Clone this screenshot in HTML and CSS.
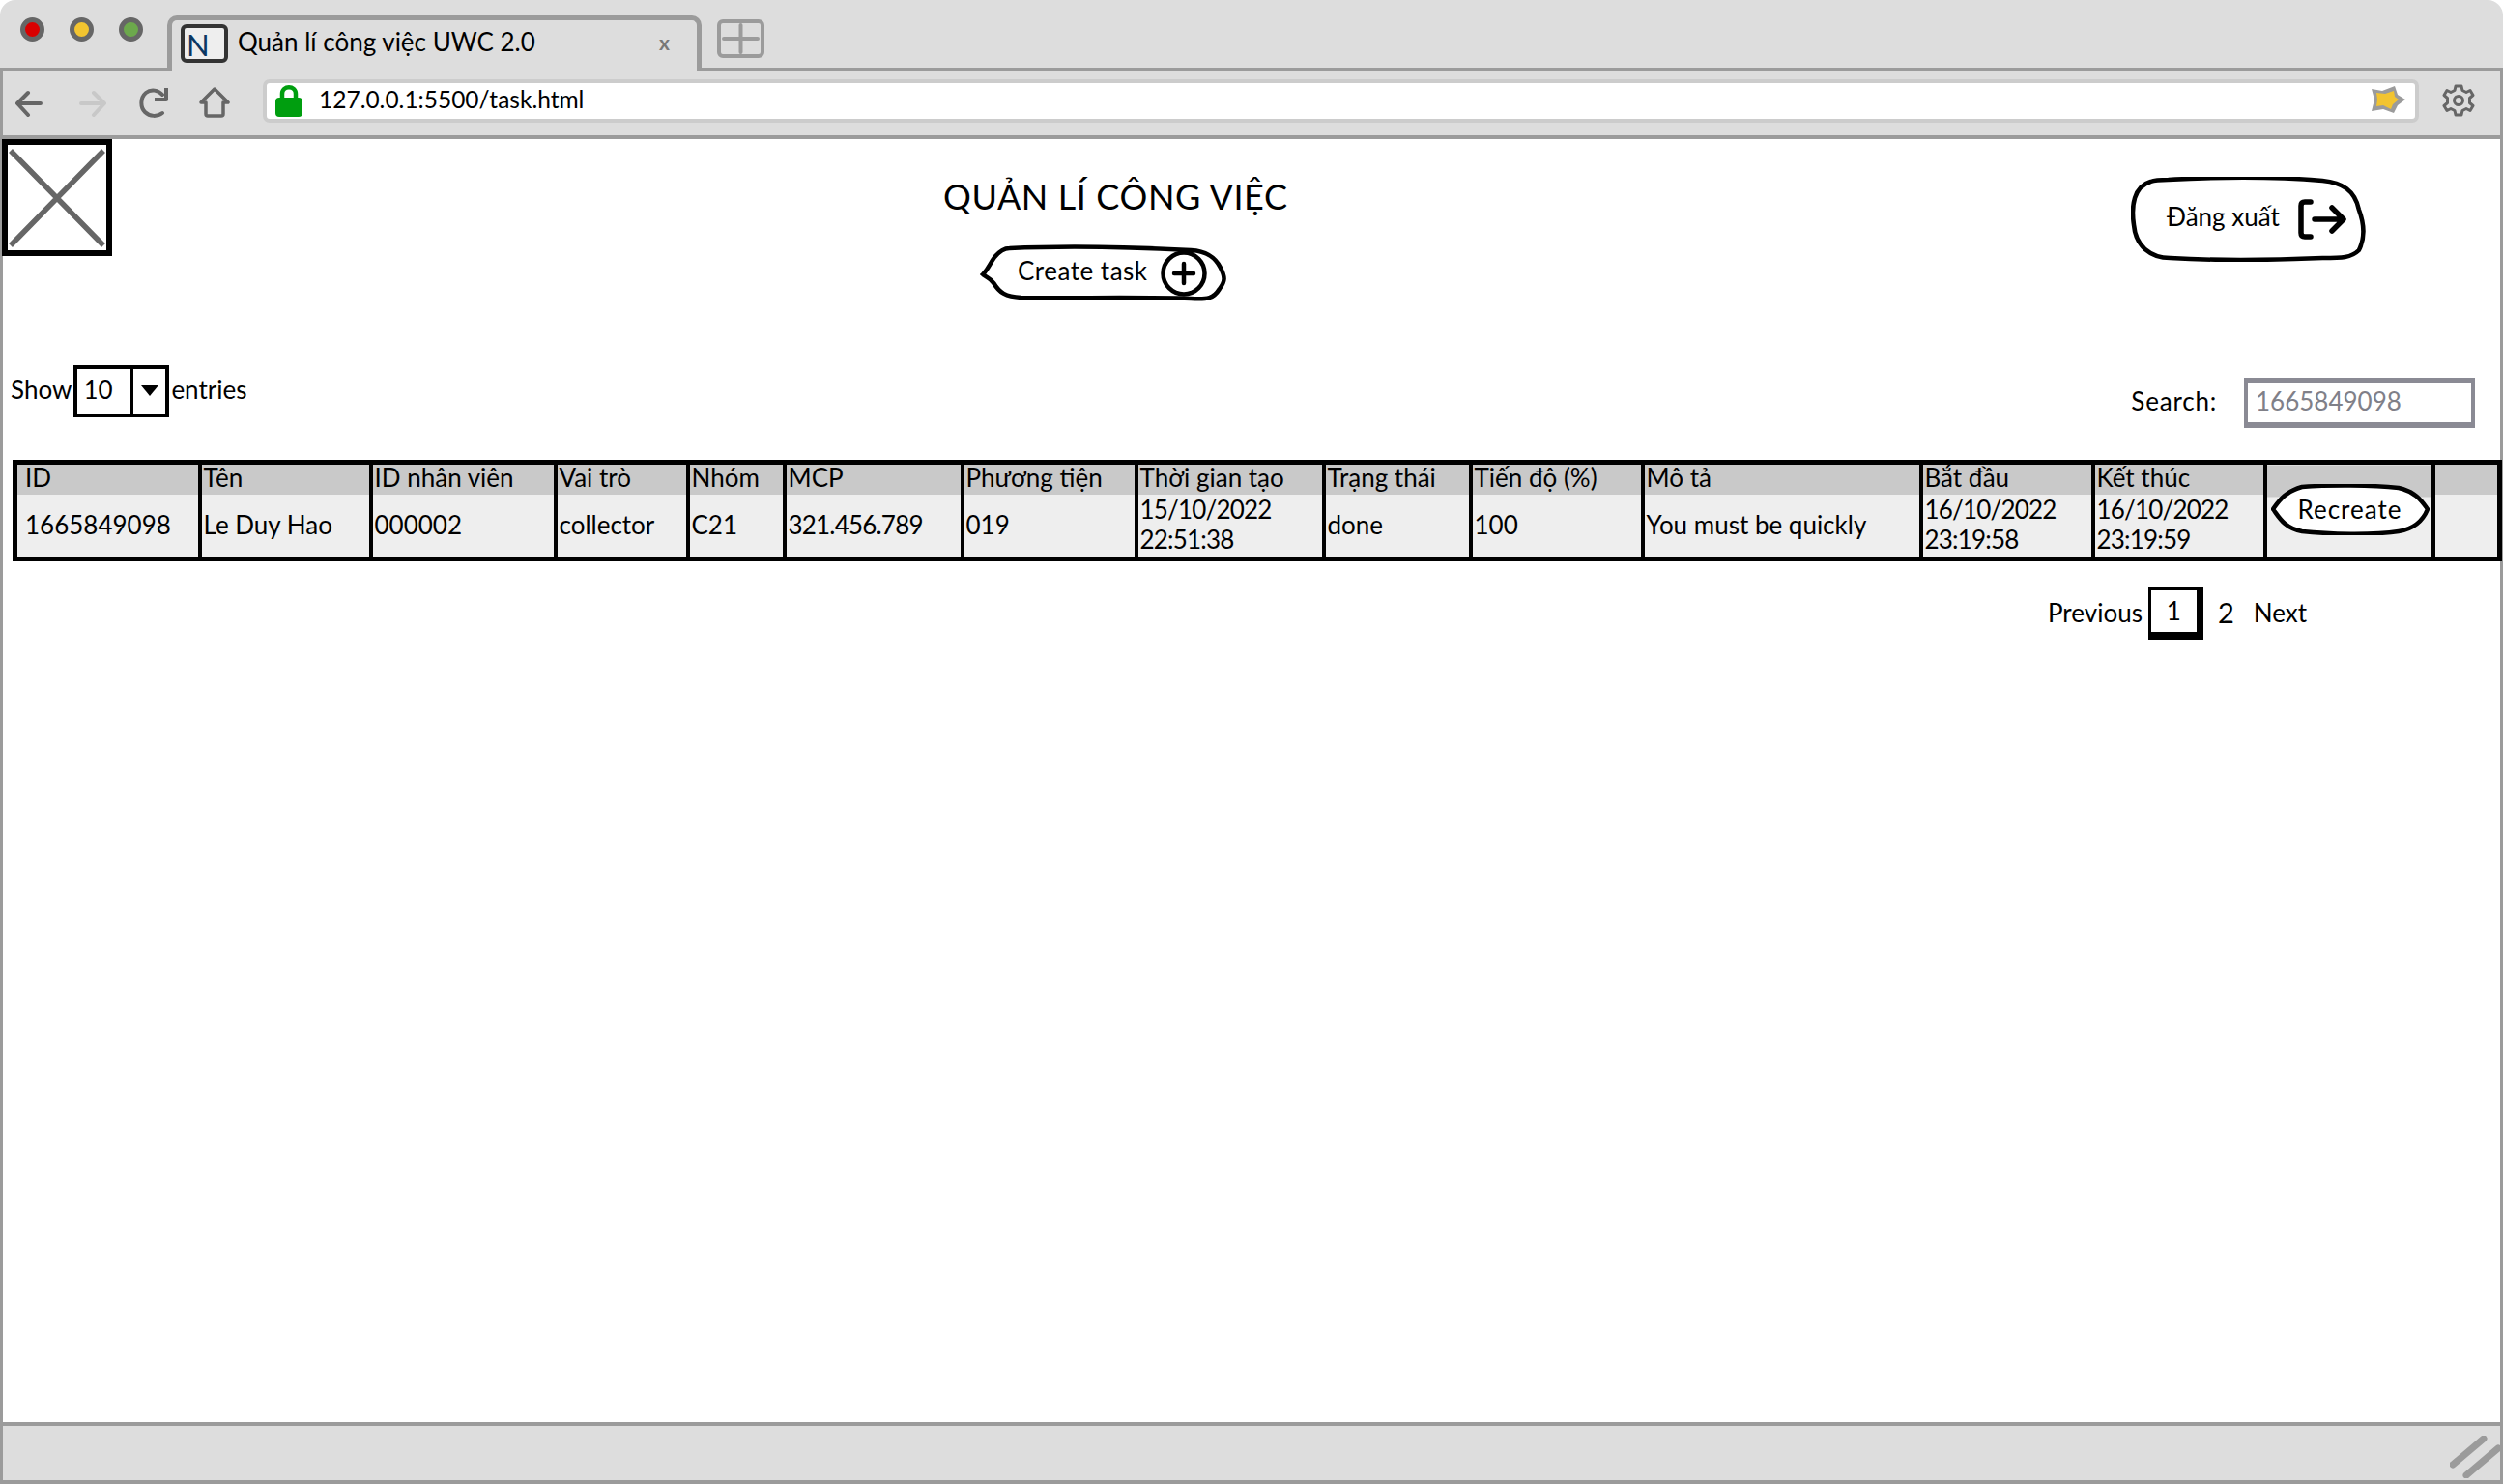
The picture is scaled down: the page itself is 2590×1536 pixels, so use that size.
FILE: index.html
```html
<!DOCTYPE html>
<html lang="vi">
<head>
  <meta charset="UTF-8" />
  <title>Quản lí công việc UWC 2.0</title>
  <link rel="stylesheet" href="styles.css">
</head>
<body>
  <div class="window">
    <div class="tabbar">
      <span class="light red"></span>
      <span class="light yellow"></span>
      <span class="light green"></span>
      <div class="tab">
        <span class="favicon">N</span>
        <span class="tab-title">Quản lí công việc UWC 2.0</span>
        <span class="tab-close">x</span>
      </div>
      <svg class="new-tab" width="49" height="40" viewBox="0 0 49 40">
        <rect x="2" y="2" width="45" height="36" rx="4" fill="none" stroke="#9b9b9b" stroke-width="4"/>
        <path d="M7 20H42M24.500 6V34" fill="none" stroke="#9b9b9b" stroke-width="4" stroke-linecap="round"/>
      </svg>
    </div>

    <div class="toolbar">
      <svg class="nav-icon back" width="28" height="28" viewBox="0 0 28 28">
        <path d="M26 14H3M13 3L2 14L13 26" fill="none" stroke="#666" stroke-width="4" stroke-linecap="round" stroke-linejoin="round"/>
      </svg>
      <svg class="nav-icon forward" width="28" height="28" viewBox="0 0 28 28">
        <path d="M2 14H25M15 3L26 14L15 26" fill="none" stroke="#c8c8c8" stroke-width="4" stroke-linecap="round" stroke-linejoin="round"/>
      </svg>
      <svg class="nav-icon reload" width="30" height="32" viewBox="0 0 30 32">
        <path d="M24 8C20 3 12 2 7 6C1 11 1 21 6 26C11 31 19 31 24 27" fill="none" stroke="#666" stroke-width="4" stroke-linecap="round"/>
        <path d="M28 1V13H16" fill="none" stroke="#666" stroke-width="4" stroke-linejoin="round"/>
      </svg>
      <svg class="nav-icon home" width="32" height="32" viewBox="0 0 32 32">
        <path d="M16 2L30 16H25V28Q25 30 23 30H9Q7 30 7 28V16H2Z" fill="none" stroke="#666" stroke-width="3.500" stroke-linejoin="round"/>
      </svg>
      <div class="address">
        <svg class="lock" width="28" height="33" viewBox="0 0 28 33">
          <path d="M7 15V9C7 0 21 0 21 9V15" fill="none" stroke="#009e0f" stroke-width="4.500"/>
          <rect x="0" y="13" width="28" height="20" rx="4" fill="#009e0f"/>
        </svg>
        <span class="url">127.0.0.1:5500/task.html</span>
        <svg class="star" width="36" height="30" viewBox="0 0 36 30">
          <path d="M0 3L11 5L24 0L27 9L35 14L27 20L23 28L12 24L0 26L3 14Z" fill="#9b9b9b"/>
          <path d="M5 7L14 8L23 5L24 11L28 14L22 19L20 24L12 20L5 21L6 14Z" fill="#f2c430"/>
        </svg>
      </div>
      <svg class="gear" width="34" height="34" viewBox="0 0 34 34">
        <path d="M14 2H20L21 6.500L25 8.500L29 6.500L32 11.500L28.500 14.500V19.500L32 22.500L29 27.500L25 25.500L21 27.500L20 32H14L13 27.500L9 25.500L5 27.500L2 22.500L5.500 19.500V14.500L2 11.500L5 6.500L9 8.500L13 6.500Z" fill="none" stroke="#666" stroke-width="3" stroke-linejoin="round"/>
        <circle cx="17" cy="17" r="4.500" fill="none" stroke="#666" stroke-width="3"/>
      </svg>
    </div>

    <div class="content">
      <div class="page-head">
        <svg class="logo" width="114" height="121" viewBox="0 0 114 121">
          <rect x="3" y="3" width="108" height="115" fill="#fff" stroke="#000" stroke-width="6"/>
          <path d="M9 12L105 110M105 12L9 110" fill="none" stroke="#666" stroke-width="5.500"/>
        </svg>
        <div class="head-center">
          <h1 class="page-title">QUẢN LÍ CÔNG VIỆC</h1>
          <button class="sketch-btn create-btn" type="button">
            <svg class="btn-shape" viewBox="0 0 253 60" preserveAspectRatio="none">
              <path d="M30 4C90 1 160 3 215 6C232 7 240 14 245 24C250 34 250 38 244 46C238 56 232 57 215 56C160 54 90 56 42 55C26 54 20 50 14 40C11 35 6 34 3 31C8 26 10 20 15 13C20 7 24 4 30 4Z" fill="#fff" stroke="#000" stroke-width="4.500"/>
            </svg>
            <span class="btn-label">Create task</span>
            <svg class="btn-icon" width="48" height="48" viewBox="0 0 48 48">
              <circle cx="24" cy="24" r="21.500" fill="#fff" stroke="#000" stroke-width="4.500"/>
              <path d="M24 14V34M14 24H34" fill="none" stroke="#000" stroke-width="4.500" stroke-linecap="round"/>
            </svg>
          </button>
        </div>
        <button class="sketch-btn logout-btn" type="button">
          <svg class="btn-shape" viewBox="0 0 239 88" preserveAspectRatio="none">
            <path d="M38 3C90 0 150 0 195 4C215 6 228 14 232 34C238 50 238 64 232 76C224 84 215 84 195 84C150 86 90 87 40 84C20 84 5 72 3 50C0 30 3 10 20 5C25 3 33 3 38 3Z" fill="#fff" stroke="#000" stroke-width="4.500"/>
          </svg>
          <span class="btn-label">Đăng xuất</span>
          <svg class="btn-icon" width="51" height="42" viewBox="0 0 51 42">
            <path d="M13 3H7Q3 3 3 7V35Q3 39 7 39H13" fill="none" stroke="#000" stroke-width="5.500" stroke-linecap="round"/>
            <path d="M17 21H46M35 9L47 21L35 33" fill="none" stroke="#000" stroke-width="5.500" stroke-linecap="round" stroke-linejoin="round"/>
          </svg>
        </button>
      </div>

      <div class="table-controls">
        <div class="show-entries">
          <span class="entries-text">Show</span>
          <div class="entries-select">
            <span class="entries-value">10</span>
            <span class="entries-arrow"></span>
          </div>
          <span class="entries-text">entries</span>
        </div>
        <label class="search-box">
          <span class="search-label">Search:</span>
          <input class="search-input" type="text" value="1665849098" />
        </label>
      </div>

      <table class="task-table">
        <colgroup>
          <col class="c-id"><col class="c-name"><col class="c-staff"><col class="c-role"><col class="c-group">
          <col class="c-mcp"><col class="c-vehicle"><col class="c-created"><col class="c-status"><col class="c-progress">
          <col class="c-desc"><col class="c-start"><col class="c-end"><col class="c-action"><col class="c-last">
        </colgroup>
        <tbody>
          <tr class="head-row">
            <th class="first">ID</th>
            <th>Tên</th>
            <th>ID nhân viên</th>
            <th>Vai trò</th>
            <th>Nhóm</th>
            <th>MCP</th>
            <th>Phương tiện</th>
            <th>Thời gian tạo</th>
            <th>Trạng thái</th>
            <th>Tiến độ (%)</th>
            <th>Mô tả</th>
            <th>Bắt đầu</th>
            <th>Kết thúc</th>
            <td class="action-cell" rowspan="2">
              <button class="sketch-btn recreate-btn" type="button">
                <svg class="btn-shape" viewBox="0 0 164 53" preserveAspectRatio="none">
                  <path d="M32 3C60 1 105 1 132 4C150 8 156 18 162 26C158 36 150 46 132 49C105 53 60 52 32 49C14 46 8 34 2 26C8 18 14 8 32 3Z" fill="#fff" stroke="#000" stroke-width="4.500"/>
                </svg>
                <span class="btn-label">Recreate</span>
              </button>
            </td>
            <th></th>
          </tr>
          <tr class="data-row">
            <td class="first">1665849098</td>
            <td>Le Duy Hao</td>
            <td>000002</td>
            <td>collector</td>
            <td>C21</td>
            <td class="num">321.456.789</td>
            <td>019</td>
            <td class="num">15/10/2022<br>22:51:38</td>
            <td>done</td>
            <td>100</td>
            <td>You must be quickly</td>
            <td class="num">16/10/2022<br>23:19:58</td>
            <td class="num">16/10/2022<br>23:19:59</td>
            <td></td>
          </tr>
        </tbody>
      </table>

      <div class="pagination">
        <span class="page-prev">Previous</span>
        <span class="page-current">1</span>
        <span class="page-link">2</span>
        <span class="page-next">Next</span>
      </div>
    </div>

    <div class="statusbar">
      <svg class="resize-grip" width="52" height="44" viewBox="0 0 52 44">
        <path d="M3 30L35 3M17 41L50 13" fill="none" stroke="#9b9b9b" stroke-width="7" stroke-linecap="round"/>
      </svg>
    </div>
  </div>
</body>
</html>
```

FILE: styles.css
```css
* {
  box-sizing: border-box;
}
body {
  margin: 0;
  background: #fff;
  color: #000;
  font-family: Lato, "Noto Sans", sans-serif;
  font-size: 26px;
}
button {
  font-family: inherit;
  font-size: inherit;
  color: inherit;
  padding: 0;
  border: none;
  background: none;
}

.window {
  display: flex;
  flex-direction: column;
  height: 100vh;
  overflow: hidden;
}

/* browser chrome */
.tabbar {
  display: flex;
  align-items: flex-start;
  flex: none;
  height: 73px;
  padding: 18px 0 0 21px;
  background: #ddd;
  border-bottom: 3px solid #9b9b9b;
  border-radius: 16px 16px 0 0;
}
.light {
  flex: none;
  width: 25px;
  height: 25px;
  margin-right: 26px;
  border: 5px solid #666;
  border-radius: 50%;
}
.red { background: #d90000; }
.yellow { background: #f2c430; }
.green { background: #6ca84c; }
.tab {
  display: flex;
  align-items: center;
  flex: none;
  width: 553px;
  height: 57px;
  margin: -2px 0 0 -1px;
  padding: 3px 28px 11px 9px;
  background: #ddd;
  border: 5px solid #9b9b9b;
  border-bottom: none;
  border-radius: 10px 10px 0 0;
}
.favicon {
  flex: none;
  width: 49px;
  height: 40px;
  margin-top: 4px;
  padding-left: 2px;
  background: #eee;
  border: 4px solid #333;
  border-radius: 6px;
  color: #0c3762;
  font-size: 31px;
  line-height: 34px;
}
.tab-title {
  margin-left: 10px;
  font-size: 26px;
  white-space: nowrap;
}
.tab-close {
  margin-left: auto;
  color: #777;
  font-size: 21px;
  font-weight: 700;
}
.new-tab {
  flex: none;
  margin: 2px 0 0 16px;
}

.toolbar {
  display: flex;
  align-items: center;
  flex: none;
  height: 71px;
  padding-bottom: 5px;
  background: #ddd;
  border-left: 3px solid #9b9b9b;
  border-right: 3px solid #9b9b9b;
  border-bottom: 4px solid #9b9b9b;
}
.nav-icon {
  flex: none;
}
.back { margin: 6px 0 0 13px; }
.forward { margin: 6px 0 0 38px; }
.reload { margin: 4px 0 0 34px; }
.home { margin: 4px 0 0 32px; }
.address {
  display: flex;
  align-items: center;
  flex: none;
  width: 2231px;
  height: 45px;
  margin-left: 34px;
  padding: 0 9px;
  background: #fff;
  border: 4px solid #ccc;
  border-radius: 7px;
}
.lock {
  flex: none;
}
.url {
  margin-top: -3px;
  margin-left: 17px;
  font-size: 24.500px;
  white-space: nowrap;
}
.star {
  margin-left: auto;
}
.gear {
  flex: none;
  margin-left: 24px;
}

/* page */
.content {
  flex: 1;
  min-height: 0;
  padding-left: 10px;
  border-left: 3px solid #9b9b9b;
  border-right: 3px solid #9b9b9b;
}
.page-head {
  display: flex;
  align-items: flex-start;
  margin-bottom: 65px;
}
.logo {
  flex: none;
  margin-left: -11px;
}
.head-center {
  display: flex;
  flex-direction: column;
  margin-left: 860px;
  padding-top: 37px;
}
.page-title {
  margin: 0;
  font-size: 36px;
  font-weight: 400;
  letter-spacing: 0.6px;
  line-height: 44px;
  white-space: nowrap;
}
.sketch-btn {
  position: relative;
  display: flex;
  align-items: center;
}
.btn-shape {
  position: absolute;
  left: 0;
  top: 0;
  width: 100%;
  height: 100%;
}
.btn-label,
.btn-icon {
  position: relative;
}
.btn-icon {
  flex: none;
}
.create-btn {
  width: 257px;
  height: 60px;
  margin: 28px 0 0 38px;
  padding: 0 22px 0 39px;
  justify-content: space-between;
}
.create-btn .btn-label {
  margin-top: -6px;
  letter-spacing: 0.5px;
}
.logout-btn {
  width: 243px;
  height: 88px;
  margin: 39px 0 0 auto;
  margin-right: 139px;
  padding: 0 19px 0 37px;
  justify-content: space-between;
}
.logout-btn .btn-label {
  margin-top: -6px;
}

.table-controls {
  display: flex;
  justify-content: space-between;
  align-items: flex-start;
  margin-bottom: 33px;
  padding-right: 26px;
}
.show-entries {
  display: flex;
  align-items: center;
  gap: 2px;
  height: 54px;
  margin-left: -2px;
}
.entries-text {
  margin-top: -4px;
}
.entries-select {
  display: flex;
  width: 99px;
  height: 54px;
  border: 4px solid #000;
}
.entries-value {
  flex: 1;
  padding-left: 6px;
  line-height: 42px;
}
.entries-arrow {
  position: relative;
  width: 36px;
  border-left: 3px solid #000;
}
.entries-arrow::after {
  content: "";
  position: absolute;
  left: 8px;
  top: 17px;
  border-left: 9px solid transparent;
  border-right: 9px solid transparent;
  border-top: 11px solid #000;
}
.search-box {
  display: flex;
  align-items: center;
  gap: 28px;
  margin-top: 13px;
}
.search-label {
  margin-top: -5px;
  letter-spacing: 0.8px;
}
.search-input {
  width: 239px;
  height: 52px;
  padding: 0 8px 4px;
  border: 4px solid #8a8a94;
  border-top-width: 5px;
  border-bottom-width: 6px;
  border-radius: 0;
  outline: none;
  color: #808088;
  font-family: inherit;
  font-size: 26px;
}

.task-table {
  width: 2571px;
  height: 105px;
  border: 5px solid #000;
  border-collapse: collapse;
  table-layout: fixed;
}
.task-table th,
.task-table td {
  padding: 0 0 0 2px;
  border-left: 4px solid #000;
  border-right: 4px solid #000;
  font-weight: 400;
  text-align: left;
  white-space: nowrap;
}
.head-row {
  height: 33px;
}
.data-row {
  height: 64px;
}
.task-table th {
  padding-bottom: 5px;
  background: #c9c9c9;
  line-height: 26px;
}
.task-table td {
  padding-bottom: 2px;
  background: #eee;
  line-height: 31px;
}
.task-table .first {
  padding-left: 8px;
}
.task-table .num {
  letter-spacing: -0.8px;
}
.task-table .action-cell {
  padding: 0 0 3px 4px;
  background: linear-gradient(#c9c9c9 33px, #eee 33px);
}
.c-id { width: 191px; }
.c-name { width: 177px; }
.c-staff { width: 191px; }
.c-role { width: 137px; }
.c-group { width: 100px; }
.c-mcp { width: 184px; }
.c-vehicle { width: 180px; }
.c-created { width: 194px; }
.c-status { width: 152px; }
.c-progress { width: 178px; }
.c-desc { width: 288px; }
.c-start { width: 178px; }
.c-end { width: 178px; }
.c-action { width: 174px; }
.c-last { width: 69px; }
.recreate-btn {
  width: 164px;
  height: 53px;
  justify-content: center;
  letter-spacing: 1px;
}

.pagination {
  display: flex;
  justify-content: flex-end;
  align-items: center;
  gap: 4px;
  height: 54px;
  margin-top: 27px;
  padding-right: 200px;
}
.page-prev {
  margin: -3px 2px 0 0;
}
.page-next {
  margin-top: -3px;
}
.page-current {
  width: 57px;
  height: 54px;
  border: 3px solid #000;
  border-right-width: 7px;
  border-bottom-width: 8px;
  line-height: 42px;
  text-align: center;
}
.page-link {
  margin: -3px 16px 0 11px;
  font-size: 29px;
}

.statusbar {
  position: relative;
  flex: none;
  height: 64px;
  background: #ddd;
  border: 3px solid #9b9b9b;
  border-top-width: 4px;
  border-bottom-width: 4px;
}
.resize-grip {
  position: absolute;
  right: 0;
  bottom: 2px;
}
```
